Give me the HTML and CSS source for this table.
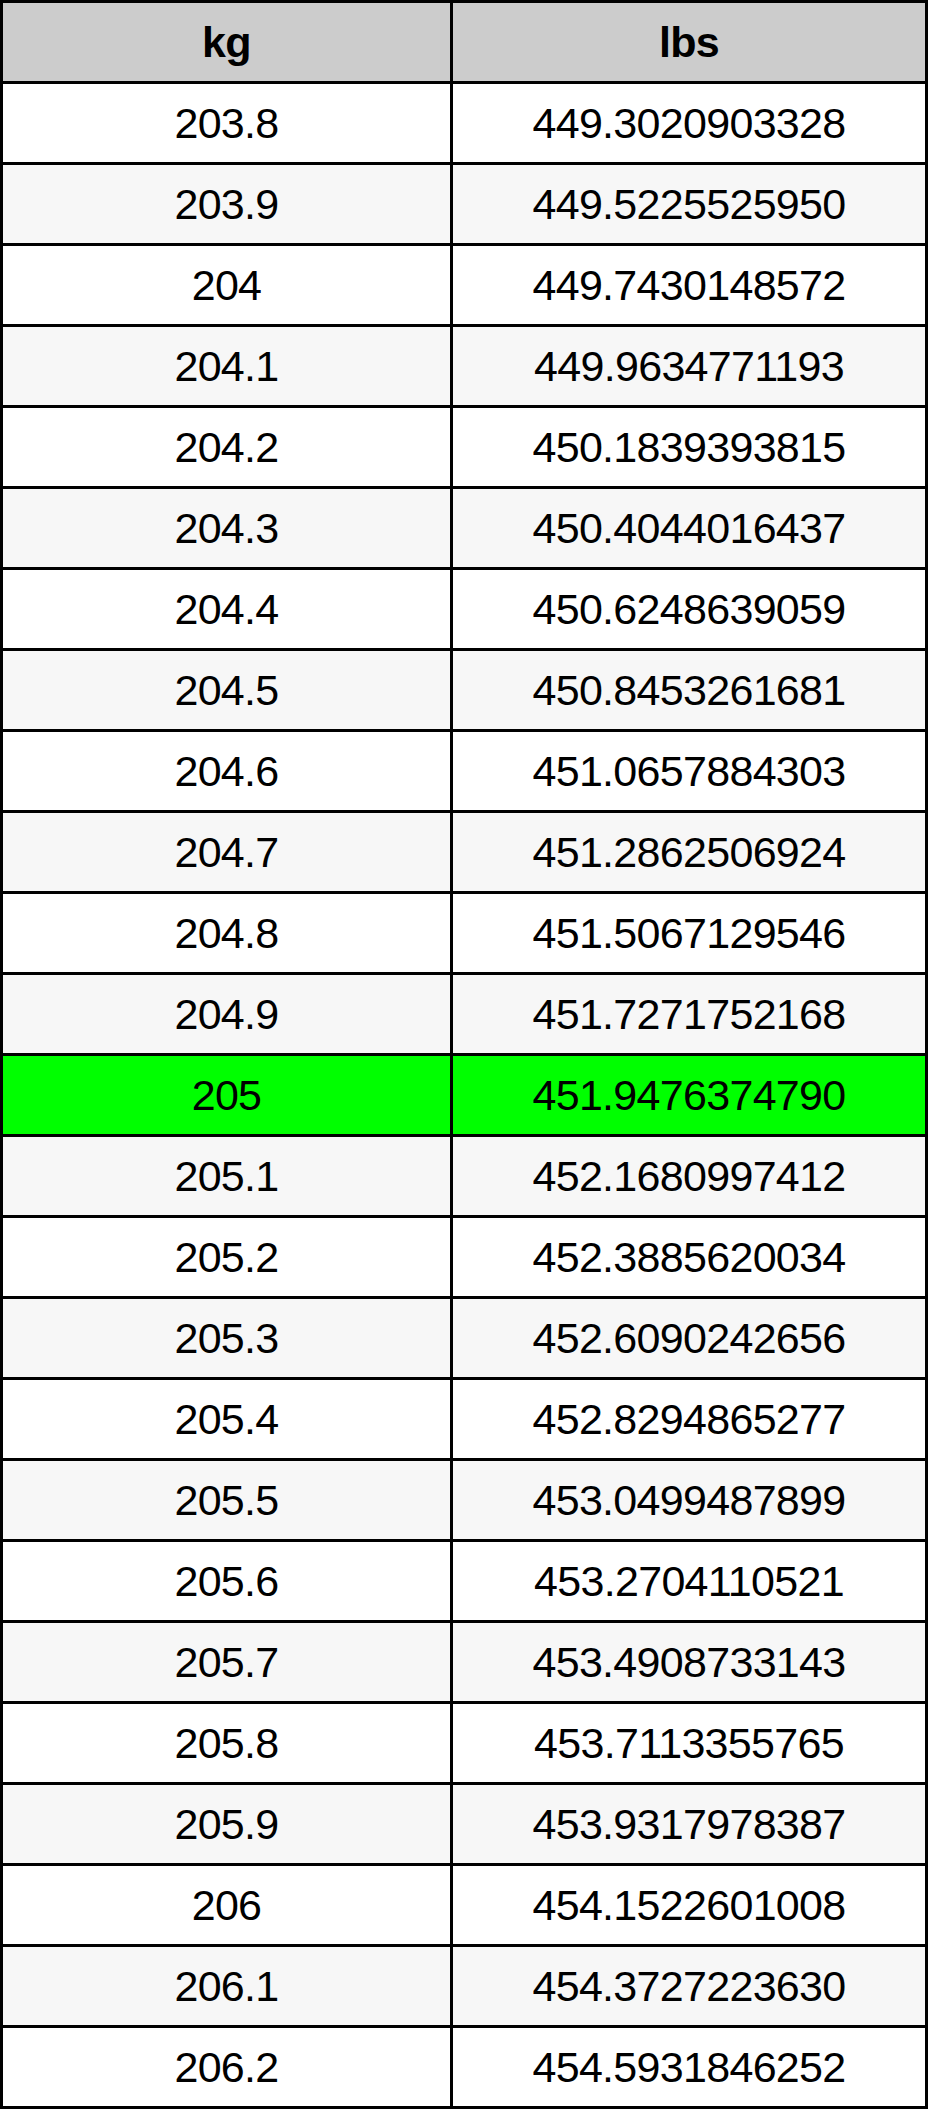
FILE: index.html
```html
<!DOCTYPE html>
<html>
<head>
<meta charset="utf-8">
<link rel="stylesheet" href="styles.css">
</head>
<body>
<table class="conv">
<colgroup><col class="c1"><col class="c2"></colgroup>
<thead>
<tr><th>kg</th><th>lbs</th></tr>
</thead>
<tbody>
<tr><td>203.8</td><td>449.3020903328</td></tr>
<tr><td>203.9</td><td>449.5225525950</td></tr>
<tr><td>204</td><td>449.7430148572</td></tr>
<tr><td>204.1</td><td>449.9634771193</td></tr>
<tr><td>204.2</td><td>450.1839393815</td></tr>
<tr><td>204.3</td><td>450.4044016437</td></tr>
<tr><td>204.4</td><td>450.6248639059</td></tr>
<tr><td>204.5</td><td>450.8453261681</td></tr>
<tr><td>204.6</td><td>451.0657884303</td></tr>
<tr><td>204.7</td><td>451.2862506924</td></tr>
<tr><td>204.8</td><td>451.5067129546</td></tr>
<tr><td>204.9</td><td>451.7271752168</td></tr>
<tr class="hl"><td>205</td><td>451.9476374790</td></tr>
<tr><td>205.1</td><td>452.1680997412</td></tr>
<tr><td>205.2</td><td>452.3885620034</td></tr>
<tr><td>205.3</td><td>452.6090242656</td></tr>
<tr><td>205.4</td><td>452.8294865277</td></tr>
<tr><td>205.5</td><td>453.0499487899</td></tr>
<tr><td>205.6</td><td>453.2704110521</td></tr>
<tr><td>205.7</td><td>453.4908733143</td></tr>
<tr><td>205.8</td><td>453.7113355765</td></tr>
<tr><td>205.9</td><td>453.9317978387</td></tr>
<tr><td>206</td><td>454.1522601008</td></tr>
<tr><td>206.1</td><td>454.3727223630</td></tr>
<tr><td>206.2</td><td>454.5931846252</td></tr>
</tbody>
</table>
</body>
</html>
```

FILE: styles.css
```css
html, body {
  margin: 0;
  padding: 0;
  background: #ffffff;
}

.conv {
  border-collapse: separate;
  border-spacing: 0;
  table-layout: fixed;
  width: 928px;
  border-top: 3px solid #000;
  border-left: 3px solid #000;
  font-family: "Liberation Sans", Arial, Helvetica, sans-serif;
  font-size: 43px;
  letter-spacing: -0.7px;
  color: #000;
}

.c1 { width: 450px; }
.c2 { width: 475px; }

.conv th,
.conv td {
  height: 78px;
  padding: 0;
  text-align: center;
  vertical-align: middle;
  border-right: 3px solid #000;
  border-bottom: 3px solid #000;
  line-height: 1;
}

.conv th {
  background: #cccccc;
  font-weight: bold;
}

.conv tbody tr:nth-child(odd) td { background: #ffffff; }
.conv tbody tr:nth-child(even) td { background: #f7f7f7; }
.conv tbody tr.hl td { background: #00ff00; }
```
